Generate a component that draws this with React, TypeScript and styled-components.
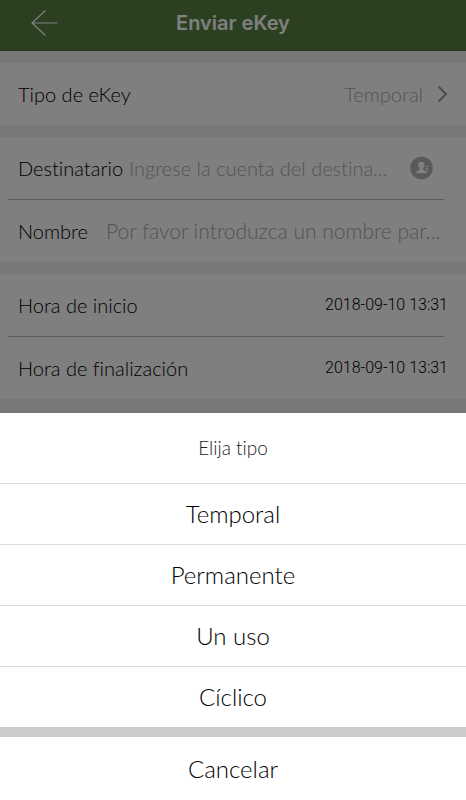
import React, { useState } from "react";
import styled, { createGlobalStyle } from "styled-components";

const GlobalStyle = createGlobalStyle`
  *, *::before, *::after { box-sizing: border-box; }
  body {
    margin: 0;
    background: #f0f0f0;
    font-family: Lato, "Open Sans", sans-serif;
    font-size: 20px;
    font-weight: 300;
    font-variant-ligatures: none;
    line-height: 24px;
    color: #000;
  }
  button, input { font: inherit; font-variant-ligatures: none; color: inherit; }
  button { cursor: pointer; }
`;

const Page = styled.div`
  min-height: 100vh;
`;

const Header = styled.header`
  display: grid;
  grid-template-columns: 88px 1fr 88px;
  align-items: center;
  height: 51px;
  padding-bottom: 4px;
  background: #567f42;
  border-bottom: 1px solid #4a6a3a;
`;

const BackButton = styled.button`
  display: flex;
  justify-content: center;
  padding: 0;
  border: 0;
  background: none;
  color: #fff;
`;

const Title = styled.h1`
  margin: 0;
  text-align: center;
  font-family: Inter, Roboto, sans-serif;
  font-size: 20px;
  font-weight: 600;
  line-height: 24px;
  color: #fff;
`;

const Form = styled.main`
  display: flex;
  flex-direction: column;
  gap: 12px;
  padding: 12px 0;
`;

const Group = styled.section`
  background: #fff;
`;

const Row = styled.div`
  display: flex;
  align-items: center;
  height: 62px;
  padding: 0 18px;
`;

const TypeRow = styled(Row).attrs({ as: "button" })`
  width: 100%;
  border: 0;
  background: none;
  text-align: left;
`;

const Divider = styled.hr`
  height: 1px;
  margin: 0 22px 0 8px;
  border: 0;
  background: #b8b8b8;
`;

const Label = styled.label`
  flex: none;
  white-space: nowrap;
`;

const Value = styled.span`
  margin-left: auto;
  margin-right: 14px;
  color: #a8a8a8;
`;

const Field = styled.input<{ $gap: number; $size: number }>`
  flex: 1;
  min-width: 0;
  margin-left: ${(p) => p.$gap}px;
  padding: 0;
  border: 0;
  outline: 0;
  background: none;
  font-size: ${(p) => p.$size}px;
  text-overflow: ellipsis;
  &::placeholder { color: #a8a8a8; opacity: 1; }
`;

const ContactButton = styled.button`
  display: flex;
  flex: none;
  margin-right: 14px;
  padding: 0;
  border: 0;
  background: none;
`;

const DateButton = styled.button`
  margin-left: auto;
  padding: 0;
  border: 0;
  background: none;
  font-family: Roboto, sans-serif;
  font-size: 16px;
`;

const Scrim = styled.div`
  position: fixed;
  inset: 0;
  display: flex;
  flex-direction: column;
  justify-content: flex-end;
  background: rgba(0, 0, 0, 0.5);
`;

const Sheet = styled.div`
  display: flex;
  flex-direction: column;
  gap: 10px;
  background: #cbcbcb;
`;

const Options = styled.div`
  display: flex;
  flex-direction: column;
  background: #fff;
`;

const SheetTitle = styled.h2`
  margin: 0;
  padding: 23px 0;
  text-align: center;
  font-size: 19px;
  font-weight: 300;
  line-height: 24px;
  color: #222;
`;

const Option = styled.button`
  height: 61px;
  padding: 0;
  border: 0;
  border-top: 1px solid #dadada;
  background: #fff;
  font-size: 24px;
`;

const Cancel = styled(Option)`
  height: 63px;
  border-top: 0;
`;

const BackIcon = () => (
  <svg width="28" height="28" viewBox="0 0 28 28" fill="none" stroke="currentColor" strokeWidth="1.2" aria-hidden="true">
    <path d="M27.500 14H1.500M15.500 1.500L2 14L15.500 26.500" />
  </svg>
);

const ChevronIcon = () => (
  <svg width="11" height="18" viewBox="0 0 11 18" fill="none" stroke="#999" strokeWidth="2" aria-hidden="true">
    <path d="M1.500 1.500L9 9L1.500 16.500" />
  </svg>
);

const ContactIcon = () => (
  <svg width="24" height="24" viewBox="0 0 24 24" aria-hidden="true">
    <circle cx="11.500" cy="12" r="11.300" fill="#b4b4b4" />
    <path
      d="M11.300 5.800c2.200 0 3.300 1.500 3.200 3.500-.1 1.500-.8 2.400-1.500 3.200v1.200c1.400.8 3.500 1 3.900 3.500H6.100c.3-2.500 2.200-2.700 3.600-3.500v-1.200c-.8-.8-1.500-1.700-1.600-3.200-.1-2 1-3.500 3.200-3.500z"
      fill="#fff"
    />
    <path d="M15.500 10.500h3M15.500 12.500h2.500M16 14.500h2.500" stroke="#fff" strokeWidth="1" />
  </svg>
);

const types = ["Temporal", "Permanente", "Un uso", "Cíclico"];

export default function App() {
  const [type, setType] = useState("Temporal");
  const [open, setOpen] = useState(true);

  const choose = (next: string) => {
    setType(next);
    setOpen(false);
  };

  return (
    <>
      <GlobalStyle />
      <Page>
        <Header>
          <BackButton type="button" aria-label="Volver">
            <BackIcon />
          </BackButton>
          <Title>Enviar eKey</Title>
        </Header>
        <Form>
          <Group>
            <TypeRow onClick={() => setOpen(true)}>
              <span>Tipo de eKey</span>
              <Value>{type}</Value>
              <ChevronIcon />
            </TypeRow>
          </Group>
          <Group>
            <Row>
              <Label htmlFor="recipient">Destinatario</Label>
              <Field id="recipient" type="text" $gap={6} $size={20} placeholder="Ingrese la cuenta del destina..." />
              <ContactButton type="button" aria-label="Contactos">
                <ContactIcon />
              </ContactButton>
            </Row>
            <Divider />
            <Row>
              <Label htmlFor="name">Nombre</Label>
              <Field id="name" type="text" $gap={18} $size={21} placeholder="Por favor introduzca un nombre par..." />
            </Row>
          </Group>
          <Group>
            <Row>
              <Label htmlFor="start">Hora de inicio</Label>
              <DateButton id="start" type="button">2018-09-10 13:31</DateButton>
            </Row>
            <Divider />
            <Row>
              <Label htmlFor="end">Hora de finalización</Label>
              <DateButton id="end" type="button">2018-09-10 13:31</DateButton>
            </Row>
          </Group>
        </Form>
      </Page>
      {open && (
        <Scrim>
          <Sheet role="dialog" aria-modal="true" aria-labelledby="sheet-title">
            <Options>
              <SheetTitle id="sheet-title">Elija tipo</SheetTitle>
              {types.map((name) => (
                <Option key={name} type="button" onClick={() => choose(name)}>
                  {name}
                </Option>
              ))}
            </Options>
            <Cancel type="button" onClick={() => setOpen(false)}>
              Cancelar
            </Cancel>
          </Sheet>
        </Scrim>
      )}
    </>
  );
}
